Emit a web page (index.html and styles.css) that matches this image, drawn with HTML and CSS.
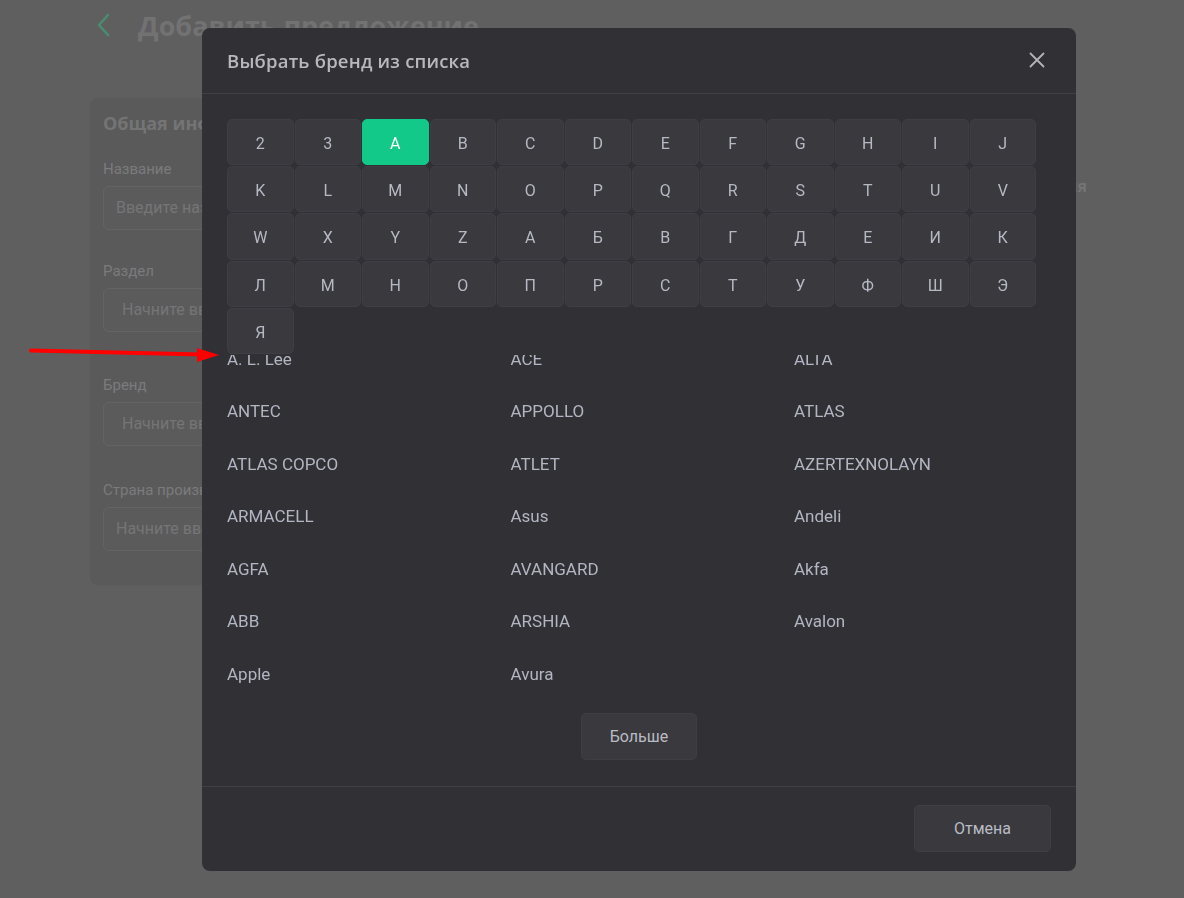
FILE: index.html
```html
<!DOCTYPE html>
<html lang="ru">
<head>
    <meta charset="UTF-8">
    <meta name="viewport" content="width=device-width, initial-scale=1.0">
    <title>Добавить предложение</title>
    <link rel="stylesheet" href="styles.css">
</head>
<body>
    <div class="page">
        <div class="page-head">
            <svg class="back-icon" width="14" height="24" viewBox="0 0 14 24">
                <path d="M12 2 L3 12 L12 22" fill="none" stroke="#4a8c71" stroke-width="2.6" stroke-linecap="round" stroke-linejoin="round"/>
            </svg>
            <h1>Добавить предложение</h1>
        </div>

        <div class="page-cols">
            <section class="card">
                <h2>Общая информация</h2>
                <div class="field">
                    <label>Название</label>
                    <div class="input">Введите название</div>
                </div>
                <div class="field">
                    <label>Раздел</label>
                    <div class="input select">Начните вводить раздел</div>
                </div>
                <div class="field">
                    <label>Бренд</label>
                    <div class="input select">Начните вводить бренд</div>
                </div>
                <div class="field">
                    <label>Страна производства</label>
                    <div class="input">Начните вводить страну</div>
                </div>
            </section>
            <section class="side">
                <h2>Фотография</h2>
            </section>
        </div>
    </div>

    <svg class="pointer-arrow" width="230" height="40" viewBox="0 0 230 40">
        <line x1="31" y1="20.5" x2="202" y2="24.5" stroke="#f00" stroke-width="4" stroke-linecap="round"/>
        <polygon points="197,18 219,25 197,32" fill="#f00"/>
    </svg>

    <div class="overlay">
        <div class="modal">
            <div class="modal-head">
                <h3>Выбрать бренд из списка</h3>
                <svg class="close-icon" width="16" height="16" viewBox="0 0 16 16">
                    <path d="M1.5 1.5 L14.5 14.5 M14.5 1.5 L1.5 14.5" stroke="#b4b4b8" stroke-width="1.8" stroke-linecap="round"/>
                </svg>
            </div>

            <div class="modal-body">
                <div class="letters">
                    <button class="letter">2</button>
                    <button class="letter">3</button>
                    <button class="letter active">A</button>
                    <button class="letter">B</button>
                    <button class="letter">C</button>
                    <button class="letter">D</button>
                    <button class="letter">E</button>
                    <button class="letter">F</button>
                    <button class="letter">G</button>
                    <button class="letter">H</button>
                    <button class="letter">I</button>
                    <button class="letter">J</button>
                    <button class="letter">K</button>
                    <button class="letter">L</button>
                    <button class="letter">M</button>
                    <button class="letter">N</button>
                    <button class="letter">O</button>
                    <button class="letter">P</button>
                    <button class="letter">Q</button>
                    <button class="letter">R</button>
                    <button class="letter">S</button>
                    <button class="letter">T</button>
                    <button class="letter">U</button>
                    <button class="letter">V</button>
                    <button class="letter">W</button>
                    <button class="letter">X</button>
                    <button class="letter">Y</button>
                    <button class="letter">Z</button>
                    <button class="letter">А</button>
                    <button class="letter">Б</button>
                    <button class="letter">В</button>
                    <button class="letter">Г</button>
                    <button class="letter">Д</button>
                    <button class="letter">Е</button>
                    <button class="letter">И</button>
                    <button class="letter">К</button>
                    <button class="letter">Л</button>
                    <button class="letter">М</button>
                    <button class="letter">Н</button>
                    <button class="letter">О</button>
                    <button class="letter">П</button>
                    <button class="letter">Р</button>
                    <button class="letter">С</button>
                    <button class="letter">Т</button>
                    <button class="letter">У</button>
                    <button class="letter">Ф</button>
                    <button class="letter">Ш</button>
                    <button class="letter">Э</button>
                    <button class="letter">Я</button>
                </div>

                <div class="brand-wrap">
                    <div class="brands">
                        <div class="brand">A. L. Lee</div>
                        <div class="brand">ACE</div>
                        <div class="brand">ALTA</div>
                        <div class="brand">ANTEC</div>
                        <div class="brand">APPOLLO</div>
                        <div class="brand">ATLAS</div>
                        <div class="brand">ATLAS COPCO</div>
                        <div class="brand">ATLET</div>
                        <div class="brand">AZERTEXNOLAYN</div>
                        <div class="brand">ARMACELL</div>
                        <div class="brand">Asus</div>
                        <div class="brand">Andeli</div>
                        <div class="brand">AGFA</div>
                        <div class="brand">AVANGARD</div>
                        <div class="brand">Akfa</div>
                        <div class="brand">ABB</div>
                        <div class="brand">ARSHIA</div>
                        <div class="brand">Avalon</div>
                        <div class="brand">Apple</div>
                        <div class="brand">Avura</div>
                    </div>
                </div>

                <div class="more-row">
                    <button class="btn">Больше</button>
                </div>
            </div>

            <div class="modal-foot">
                <button class="btn btn-cancel">Отмена</button>
            </div>
        </div>
    </div>
</body>
</html>
```

FILE: styles.css
```css
body {
    margin: 0;
    background-color: #5f5f60;
    font-family: Roboto, 'Noto Sans', Arial, sans-serif;
    min-height: 100vh;
}

button {
    font-family: inherit;
    cursor: pointer;
}

/* page behind the dialog */

.page {
    padding: 10px 97px 0 90px;
}

.page-head {
    display: flex;
    align-items: center;
    height: 30px;
}

.back-icon {
    margin-left: 6px;
}

.page-head h1 {
    margin: 0 0 0 28px;
    font-family: 'Open Sans', Arial, sans-serif;
    font-size: 27px;
    font-weight: 700;
    color: #727273;
}

.page-cols {
    display: flex;
    justify-content: space-between;
    margin-top: 58px;
}

.card {
    width: 560px;
    padding: 13px 13px 34px;
    background-color: #5a5a5b;
    border-radius: 8px;
}

.card h2 {
    margin: 0 0 24px;
    line-height: 24px;
    font-family: 'Open Sans', Arial, sans-serif;
    font-size: 18px;
    font-weight: 700;
    color: #747475;
}

.field:nth-of-type(2) {
    margin-top: 31px;
}

.field:nth-of-type(3) {
    margin-top: 43px;
}

.field:nth-of-type(4) {
    margin-top: 34px;
}

.field label {
    display: block;
    line-height: 20px;
    margin-bottom: 7px;
    font-size: 15px;
    color: #7b7b7c;
}

.input {
    height: 42px;
    line-height: 42px;
    padding: 0 12px;
    border: 1px solid #646465;
    border-radius: 6px;
    background-color: #5b5b5c;
    font-size: 16px;
    color: #757576;
}

.input.select {
    padding-left: 18px;
}

.side h2 {
    margin: 77px 0 0;
    font-family: 'Open Sans', Arial, sans-serif;
    font-size: 16px;
    font-weight: 700;
    color: #747475;
}

.pointer-arrow {
    position: absolute;
    left: 0;
    top: 330px;
    z-index: 20;
}

/* dialog */

.overlay {
    position: fixed;
    inset: 0;
    display: flex;
    align-items: center;
    justify-content: center;
    padding-left: 94px;
    z-index: 10;
}

.modal {
    width: 874px;
    background-color: #313035;
    border-radius: 8px;
    overflow: hidden;
}

.modal-head {
    display: flex;
    align-items: center;
    justify-content: space-between;
    height: 65px;
    padding: 0 31px 0 25px;
    border-bottom: 1px solid #403f44;
}

.modal-head h3 {
    margin: 0;
    font-family: 'Open Sans', Arial, sans-serif;
    font-size: 18.5px;
    font-weight: 600;
    letter-spacing: 0.2px;
    color: #b9b9bd;
}

.modal-body {
    padding: 25px 25px 26px;
    border-bottom: 1px solid #403f44;
}

.letters {
    display: grid;
    grid-template-columns: repeat(12, 66.5px);
    grid-auto-rows: 46.4px;
    gap: 1px;
    height: 236px;
}

.letter {
    padding: 3px 0 0;
    border: 1px solid #3f3e44;
    border-radius: 5px;
    background-color: #3a393e;
    font-size: 16px;
    color: #b6b9c3;
}

.letter.active {
    background-color: #12c98a;
    border-color: #12c98a;
    color: #fff;
}

.brand-wrap {
    overflow: hidden;
}

.brands {
    display: grid;
    grid-template-columns: repeat(3, 283.5px);
    grid-auto-rows: 52.5px;
    margin-top: -22px;
}

.brand {
    display: flex;
    align-items: center;
    font-size: 17px;
    color: #b2b6c2;
}

.more-row {
    display: flex;
    justify-content: center;
    margin-top: 12.5px;
}

.btn {
    height: 47px;
    padding: 0 28px;
    border: 1px solid #3f3e44;
    border-radius: 5px;
    background-color: #3a393e;
    font-size: 16px;
    color: #b9bcc4;
}

.modal-foot {
    display: flex;
    justify-content: flex-end;
    padding: 18px 25px 19px;
}

.btn-cancel {
    width: 137px;
}
```
